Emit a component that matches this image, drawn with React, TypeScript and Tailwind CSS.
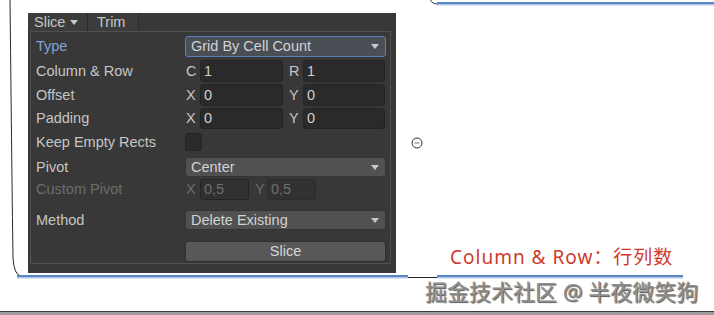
import type { ReactNode } from "react"

const Arrow = () => (
  <span className="h-0 w-0 border-x-[4px] border-t-[5px] border-x-transparent border-t-[#c8c8c8]" />
)

function Row({ label, className, dim, blue, children }: { label: string, className: string, dim?: boolean, blue?: boolean, children?: ReactNode }) {
  return (
    <div className={`flex items-center ${className}`}>
      <span className={`w-[149px] shrink-0 ${blue ? "text-[#7fa3d9]" : dim ? "text-[#6c6c6c]" : "text-[#c6c6c6]"}`}>{label}</span>
      {children}
    </div>
  )
}

function Field({ axis, value, w, dim }: { axis: string, value: string, w: string, dim?: boolean }) {
  return (
    <div className="flex h-full items-center">
      <span className={`w-[15px] pl-[1px] ${dim ? "text-[#6c6c6c]" : "text-[#c6c6c6]"}`}>{axis}</span>
      <div className={`flex h-full items-center rounded-[3px] border border-[#242424] pl-[3px] ${w} ${dim ? "bg-[#313131] text-[#6f6f6f]" : "bg-[#2a2a2a] text-[#d0d0d0]"}`}>
        {value}
      </div>
    </div>
  )
}

function Dropdown({ text, focus }: { text: string, focus?: boolean }) {
  return (
    <div className={`flex h-full w-[201px] items-center justify-between rounded-[3px] border pl-[5px] pr-[6px] text-[#d2d2d2] ${focus ? "border-[#5b7fb6] bg-[#4a4e55]" : "border-[#343434] bg-[#515151]"}`}>
      <span>{text}</span>
      <Arrow />
    </div>
  )
}

export default function App() {
  return (
    <div className="relative flex h-[315px] w-[714px] overflow-hidden bg-white font-['Liberation_Sans',Arial,sans-serif] text-[14.5px] leading-none">
      <svg className="pointer-events-none absolute inset-0" width="714" height="315">
        <path d="M10 0 C 11 90, 12 190, 13 258 Q 14 275 21 276" stroke="#2a2a2a" strokeWidth="1" fill="none" />
        <rect x="17" y="275" width="391" height="2.5" fill="#5b86c4" />
        <rect x="17" y="277.5" width="391" height="1" fill="#b3c8e6" />
        <line x1="408" y1="277.5" x2="437" y2="277.5" stroke="#222" strokeWidth="1" />
        <rect x="437" y="275" width="246" height="2.5" fill="#5b86c4" />
        <rect x="437" y="277.5" width="246" height="1" fill="#b3c8e6" />
        <path d="M430.5 0 Q 432 4 438 4" stroke="#333" strokeWidth="1" fill="none" />
        <rect x="437" y="2" width="277" height="2.5" fill="#5b86c4" />
        <rect x="437" y="4.5" width="277" height="1" fill="#b3c8e6" />
        <rect x="0" y="311" width="714" height="1" fill="#3a3a3a" />
        <rect x="0" y="312" width="714" height="3" fill="#9c9c9c" />
      </svg>

      <div className="ml-[28px] mt-[13px] flex h-[260px] w-[368px] shrink-0 flex-col bg-[#383838] text-[#c6c6c6]">
        <div className="flex h-[18px] shrink-0">
          <div className="flex w-[60px] items-center gap-[5px] border-r border-r-[#2b2b2b] bg-[#3c3c3c] pl-[6px]">
            <span>Slice</span>
            <Arrow />
          </div>
          <div className="flex w-[51px] items-center border-r border-r-[#2b2b2b] bg-[#3c3c3c] pl-[9px]">Trim</div>
        </div>
        <div className="ml-[2px] mr-[5px] flex flex-col border border-[#505050] pb-[1px] pl-[5px]">
          <Row label="Type" blue className="mt-[4px] h-[21px]">
            <Dropdown text="Grid By Cell Count" focus />
          </Row>
          <Row label="Column & Row" className="mt-[3px] h-[22px]">
            <Field axis="C" value="1" w="w-[83px]" />
            <div className="w-[5px]" />
            <Field axis="R" value="1" w="w-[82px]" />
          </Row>
          <Row label="Offset" className="mt-[2px] h-[22px]">
            <Field axis="X" value="0" w="w-[83px]" />
            <div className="w-[5px]" />
            <Field axis="Y" value="0" w="w-[82px]" />
          </Row>
          <Row label="Padding" className="mt-[2px] h-[21px]">
            <Field axis="X" value="0" w="w-[83px]" />
            <div className="w-[5px]" />
            <Field axis="Y" value="0" w="w-[82px]" />
          </Row>
          <Row label="Keep Empty Rects" className="mt-[4px] h-[18px]">
            <div className="h-[18px] w-[17px] rounded-[3px] border border-[#242424] bg-[#2b2b2b]" />
          </Row>
          <Row label="Pivot" className="mt-[6px] h-[20px]">
            <Dropdown text="Center" />
          </Row>
          <Row label="Custom Pivot" dim className="mt-[2px] h-[21px]">
            <Field axis="X" value="0,5" w="w-[49px]" dim />
            <div className="w-[6px]" />
            <span className="w-[12px] text-[#6c6c6c]">Y</span>
            <div className="flex h-full w-[49px] items-center rounded-[3px] border border-[#2c2c2c] bg-[#313131] pl-[3px] text-[#6f6f6f]">0,5</div>
          </Row>
          <Row label="Method" className="mt-[10px] h-[20px]">
            <Dropdown text="Delete Existing" />
          </Row>
          <div className="mt-[11px] flex h-[21px] pl-[149px]">
            <div className="flex w-[201px] items-center justify-center rounded-[3px] border border-[#303030] bg-[#585858] text-[#d6d6d6]">
              Slice
            </div>
          </div>
        </div>
      </div>

      <div className="flex flex-col">
        <svg className="ml-[15px] mt-[137px]" width="12" height="12" viewBox="0 0 12 12">
          <circle cx="6" cy="6" r="5" stroke="#333" strokeWidth="1" fill="none" />
          <line x1="3.5" y1="6" x2="8.5" y2="6" stroke="#777" strokeWidth="1" />
        </svg>
        <div className="ml-[54px] mt-[97px] whitespace-nowrap font-['Noto_Sans','Noto_Sans_CJK_SC',sans-serif] text-[19px] leading-[22px] tracking-[1px] text-[#cf3a2c]">
          Column &amp; Row：行列数
        </div>
        <div className="ml-[29px] mt-[11px] whitespace-nowrap font-['Noto_Sans','Noto_Sans_CJK_SC',sans-serif] text-[22px] leading-[24px] text-[#909090] [text-shadow:1px_1px_1px_#555]">
          掘金技术社区 @ 半夜微笑狗
        </div>
      </div>
    </div>
  )
}
